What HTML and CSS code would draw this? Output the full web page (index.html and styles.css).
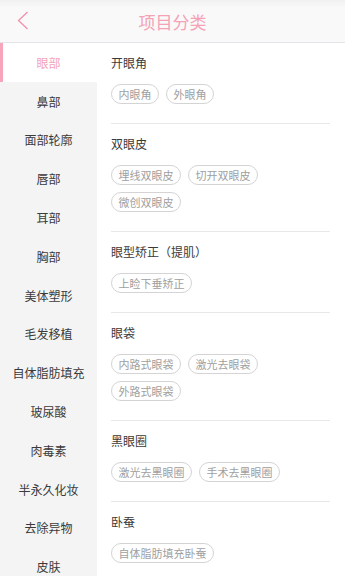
FILE: index.html
```html
<!DOCTYPE html>
<html lang="zh">
<head>
<meta charset="utf-8">
<title>项目分类</title>
<link rel="stylesheet" href="styles.css">
</head>
<body>
<div class="app">
  <header class="topbar">
    <span class="back"><svg width="12" height="19" viewBox="0 0 12 19"><path d="M10.5 1 L1.5 9.5 L10.5 18" fill="none" stroke="#f291aa" stroke-width="1.3"/></svg></span>
    <h1 class="title">项目分类</h1>
  </header>
  <div class="main">
    <nav class="side">
      <div class="side-item active">眼部</div>
      <div class="side-item">鼻部</div>
      <div class="side-item">面部轮廓</div>
      <div class="side-item">唇部</div>
      <div class="side-item">耳部</div>
      <div class="side-item">胸部</div>
      <div class="side-item">美体塑形</div>
      <div class="side-item">毛发移植</div>
      <div class="side-item">自体脂肪填充</div>
      <div class="side-item">玻尿酸</div>
      <div class="side-item">肉毒素</div>
      <div class="side-item">半永久化妆</div>
      <div class="side-item">去除异物</div>
      <div class="side-item">皮肤</div>
    </nav>
    <section class="content">
      <div class="group first">
        <h2 class="group-title">开眼角</h2>
        <div class="tags"><span class="tag">内眼角</span><span class="tag">外眼角</span></div>
      </div>
      <div class="group">
        <h2 class="group-title">双眼皮</h2>
        <div class="tags"><span class="tag">埋线双眼皮</span><span class="tag">切开双眼皮</span><span class="tag">微创双眼皮</span></div>
      </div>
      <div class="group">
        <h2 class="group-title">眼型矫正（提肌）</h2>
        <div class="tags"><span class="tag">上睑下垂矫正</span></div>
      </div>
      <div class="group">
        <h2 class="group-title">眼袋</h2>
        <div class="tags"><span class="tag">内路式眼袋</span><span class="tag">激光去眼袋</span><span class="tag">外路式眼袋</span></div>
      </div>
      <div class="group">
        <h2 class="group-title">黑眼圈</h2>
        <div class="tags"><span class="tag">激光去黑眼圈</span><span class="tag">手术去黑眼圈</span></div>
      </div>
      <div class="group">
        <h2 class="group-title">卧蚕</h2>
        <div class="tags"><span class="tag">自体脂肪填充卧蚕</span></div>
      </div>
    </section>
  </div>
</div>
</body>
</html>
```
FILE: styles.css
```css
html, body {
  margin: 0;
  padding: 0;
  background: #fff;
}
body {
  font-family: "Noto Sans CJK SC", "Noto Sans", sans-serif;
  color: #333;
}
.app {
  width: 345px;
  height: 576px;
  overflow: hidden;
  display: flex;
  flex-direction: column;
}
.topbar {
  flex: none;
  height: 43px;
  box-sizing: border-box;
  background: linear-gradient(#f1f1f1, #f9f9f9 8px);
  border-bottom: 1px solid #e3e5ea;
  display: flex;
  align-items: center;
  justify-content: center;
  position: relative;
}
.back {
  position: absolute;
  left: 17px;
  top: 11px;
  display: flex;
}
.title {
  margin: 0;
  font-size: 17px;
  font-weight: normal;
  color: #f4a3b7;
}
.main {
  display: flex;
  flex: 1;
  min-height: 0;
}
.side {
  width: 97px;
  flex: none;
  background: #f4f4f4;
  display: flex;
  flex-direction: column;
}
.side-item {
  height: 38.8px;
  flex: none;
  display: flex;
  align-items: center;
  justify-content: center;
  font-size: 12px;
  color: #3a3a3a;
  box-sizing: border-box;
}
.side-item.active {
  background: #fff;
  color: #f4a3b7;
  border-left: 3px solid #f7a5ba;
  padding-right: 3px;
}
.content {
  flex: 1;
  padding: 0 15px 0 14px;
}
.group {
  padding: 11px 0 19px;
  border-top: 1px solid #e8e8e8;
}
.group.first {
  border-top: none;
}
.group-title {
  margin: 0 0 12px;
  font-size: 12px;
  font-weight: normal;
  line-height: 18px;
  color: #3a3a3a;
}
.tags {
  display: flex;
  flex-wrap: wrap;
  gap: 7px 7px;
}
.tag {
  height: 20px;
  box-sizing: border-box;
  border: 1px solid #d4d4d4;
  border-radius: 10px;
  padding: 0 6.5px;
  font-size: 11px;
  line-height: 18px;
  color: #a0a0a0;
}
```
